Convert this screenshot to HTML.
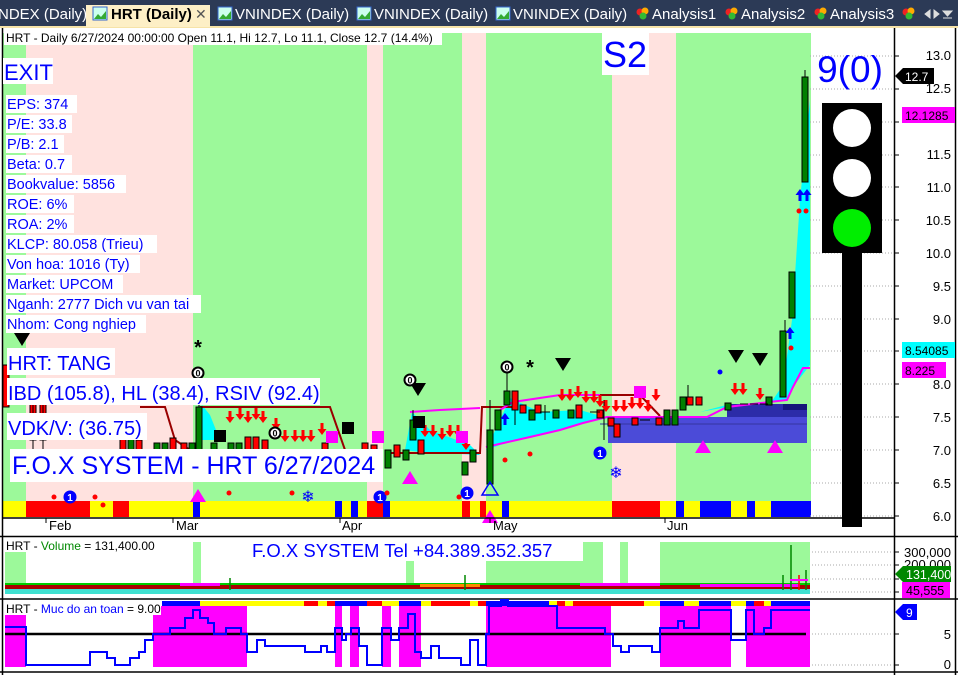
<!DOCTYPE html>
<html><head><meta charset="utf-8"><style>
body{margin:0;width:958px;height:675px;overflow:hidden;background:#fff;font-family:"Liberation Sans",Arial,sans-serif;}
svg{position:absolute;left:0;top:0}
</style></head><body>
<svg width="958" height="675" xmlns="http://www.w3.org/2000/svg" font-family="Liberation Sans, Arial, sans-serif">
<defs>
<g id="ra"><path d="M-1.5,-7 h3 v6 h3 l-4.5,6 l-4.5,-6 h3z" fill="#f00"/></g>
<g id="ba"><path d="M-1.5,7 h3 v-6 h3 l-4.5,-6 l-4.5,6 h3z" fill="#00f"/></g>
<g id="bt"><path d="M-8,-7 h16 l-8,13z" fill="#000"/></g>
<g id="mt"><path d="M-8,6 h16 l-8,-13z" fill="#f0f"/></g>
<g id="one"><circle r="6.5" fill="#00f"/><text y="4" text-anchor="middle" font-size="10" font-weight="bold" fill="#fff">1</text></g>
<g id="zero"><circle r="5.5" fill="#fff" stroke="#000" stroke-width="2"/><text y="3.5" text-anchor="middle" font-size="9" font-weight="bold">0</text></g>
</defs>
<!-- tab bar -->
<rect x="0" y="0" width="958" height="28" fill="#2c3a56"/>
<rect x="0" y="26" width="958" height="2" fill="#f6e3a8"/>
<path d="M86,27 V5 h124 v22z" fill="#fdefc6"/>
<g font-size="15" fill="#fff">
<text x="-2" y="19">NDEX (Daily)</text>
<rect x="93" y="7" width="14" height="13" fill="#cfe" stroke="#36c"/><path d="M94,19 l4,-5 3,3 5,-6 v8z" fill="#3a3"/>
<text x="111" y="19" fill="#000" font-weight="bold">HRT (Daily)</text>
<text x="195" y="19" fill="#555" font-size="14">✕</text>
<rect x="218" y="7" width="14" height="13" fill="#cfe" stroke="#36c"/><path d="M219,19 l4,-5 3,3 5,-6 v8z" fill="#3a3"/>
<text x="235" y="19">VNINDEX (Daily)</text>
<rect x="357" y="7" width="14" height="13" fill="#cfe" stroke="#36c"/><path d="M358,19 l4,-5 3,3 5,-6 v8z" fill="#3a3"/>
<text x="374" y="19">VNINDEX (Daily)</text>
<rect x="496" y="7" width="14" height="13" fill="#cfe" stroke="#36c"/><path d="M497,19 l4,-5 3,3 5,-6 v8z" fill="#3a3"/>
<text x="513" y="19">VNINDEX (Daily)</text>
<g><circle cx="640" cy="12" r="3.5" fill="#e22"/><circle cx="645" cy="11" r="3.5" fill="#fa0"/><circle cx="643" cy="16" r="3.5" fill="#3b3"/></g>
<text x="652" y="19">Analysis1</text>
<g><circle cx="729" cy="12" r="3.5" fill="#e22"/><circle cx="734" cy="11" r="3.5" fill="#fa0"/><circle cx="732" cy="16" r="3.5" fill="#3b3"/></g>
<text x="741" y="19">Analysis2</text>
<g><circle cx="818" cy="12" r="3.5" fill="#e22"/><circle cx="823" cy="11" r="3.5" fill="#fa0"/><circle cx="821" cy="16" r="3.5" fill="#3b3"/></g>
<text x="830" y="19">Analysis3</text>
<g><circle cx="906" cy="12" r="3.5" fill="#e22"/><circle cx="911" cy="11" r="3.5" fill="#fa0"/><circle cx="909" cy="16" r="3.5" fill="#3b3"/></g>
<path d="M925,14 l5,-4 v8z M934,10 l5,4 -5,4z M943,11 h9 l-4.5,5z M943,18 h9" fill="#ddd" stroke="#ddd"/>
</g>
<!-- main bg stripes -->
<g>
<rect x="3" y="33" width="23" height="468" fill="#9cf99a"/>
<rect x="26" y="33" width="167" height="468" fill="#ffe2df"/>
<rect x="193" y="33" width="174" height="468" fill="#9cf99a"/>
<rect x="367" y="33" width="16" height="468" fill="#ffe2df"/>
<rect x="383" y="33" width="79" height="468" fill="#9cf99a"/>
<rect x="462" y="33" width="24" height="468" fill="#ffe2df"/>
<rect x="486" y="33" width="126" height="468" fill="#9cf99a"/>
<rect x="612" y="33" width="64" height="468" fill="#ffe2df"/>
<rect x="676" y="33" width="135" height="468" fill="#9cf99a"/>
</g>
<!-- color bar -->
<g>
<rect x="3" y="501" width="808" height="16" fill="#ff0"/>
<rect x="26" y="501" width="64" height="16" fill="#f00"/>
<rect x="113" y="501" width="16" height="16" fill="#f00"/>
<rect x="193" y="501" width="7" height="16" fill="#00f"/>
<rect x="335" y="501" width="7" height="16" fill="#00f"/>
<rect x="351" y="501" width="7" height="16" fill="#00f"/>
<rect x="367" y="501" width="16" height="16" fill="#f00"/>
<rect x="383" y="501" width="7" height="16" fill="#00f"/>
<rect x="462" y="501" width="8" height="16" fill="#f00"/>
<rect x="480" y="501" width="6" height="16" fill="#f00"/>
<rect x="502" y="501" width="7" height="16" fill="#00f"/>
<rect x="612" y="501" width="48" height="16" fill="#f00"/>
<rect x="676" y="501" width="8" height="16" fill="#00f"/>
<rect x="700" y="501" width="31" height="16" fill="#00f"/>
<rect x="747" y="501" width="8" height="16" fill="#00f"/>
<rect x="771" y="501" width="40" height="16" fill="#00f"/>
</g>
<!-- grid dotted -->
<g stroke="#aaa" stroke-dasharray="1,2">
<path d="M810,56H894M810,89H894M810,122H894M810,155H894M810,187H894M810,220H894M810,253H894M810,286H894M810,319H894M810,351H894M810,384H894M810,417H894M810,450H894M810,483H894M810,516H894"/>
</g>
<!-- cyan areas -->
<g fill="#0ff">
<path d="M486,450 L500,420 L510,398 L540,412 L580,410 L608,418 L583,423 L560,430 L530,437 L500,445z"/>
<path d="M196,440 L202,405 L210,415 L220,440z"/>
<path d="M405,450 L412,412 L430,430 L470,445 L480,455 L420,452z"/>
<path d="M700,412 L730,404 L770,404 L783,385 L792,320 L800,200 L810,100 L810,365 L793,387 L787,400 L727,407z"/>
</g>
<!-- blue boxes -->
<rect x="608" y="417" width="199" height="26" fill="#4b4bd8"/>
<rect x="727" y="404" width="80" height="13" fill="#2c2ca8"/>
<rect x="783" y="404" width="24" height="6" fill="#15157a"/>
<path d="M600,424H807" stroke="#3535a0"/>
<!-- lines -->
<g fill="none" stroke-width="2">
<path d="M140,407 L165,407 L175,440 L190,450" stroke="#900"/>
<path d="M200,407 L330,407 L345,450" stroke="#900"/>
<path d="M390,453 L480,453 L482,407 L513,407" stroke="#900"/>
<path d="M560,395 L640,395 L660,416" stroke="#900"/>
<path d="M410,412 L440,410 L480,408" stroke="#f0f"/>
<path d="M486,447 L530,437 L560,430 L583,423 L607,417 L707,417 L727,407 L787,400 L793,387 L803,368 L810,368" stroke="#f0f"/>
<path d="M500,410 L513,402 L560,395 L600,395" stroke="#f0f"/>
</g>
<!-- candles -->
<g stroke="#000" stroke-width="1">
<g fill="#f00">
<rect x="3" y="365" width="6" height="42"/><rect x="30" y="392" width="6" height="48"/><rect x="40" y="400" width="6" height="40"/>
<rect x="120" y="435" width="6" height="15"/><rect x="136" y="440" width="6" height="10"/>
<rect x="170" y="438" width="6" height="12"/><rect x="181" y="443" width="6" height="7"/>
<rect x="245" y="437" width="6" height="13"/><rect x="253" y="437" width="6" height="13"/><rect x="262" y="440" width="6" height="10"/><rect x="322" y="443" width="6" height="7"/>
<rect x="362" y="443" width="6" height="9"/><rect x="371" y="445" width="6" height="8"/><rect x="394" y="445" width="6" height="12"/><rect x="418" y="440" width="6" height="14"/>
<rect x="512" y="391" width="6" height="19"/><rect x="520" y="405" width="6" height="8"/><rect x="535" y="405" width="6" height="8"/><rect x="576" y="405" width="6" height="13"/><rect x="597" y="410" width="6" height="8"/><rect x="608" y="418" width="6" height="8"/><rect x="614" y="424" width="6" height="13"/><rect x="632" y="418" width="6" height="7"/><rect x="656" y="418" width="6" height="7"/><rect x="687" y="397" width="6" height="8"/><rect x="696" y="397" width="6" height="8"/>
</g>
<g fill="#008000">
<rect x="154" y="443" width="6" height="7"/><rect x="162" y="443" width="6" height="7"/><rect x="189" y="443" width="6" height="7"/>
<rect x="128" y="438" width="6" height="12"/>
<rect x="196" y="407" width="6" height="43"/><path d="M199,450V480" />
<rect x="211" y="443" width="6" height="7"/><rect x="228" y="443" width="6" height="7"/><rect x="236" y="443" width="6" height="7"/>
<rect x="385" y="450" width="6" height="18"/><rect x="403" y="450" width="6" height="10"/><rect x="410" y="420" width="6" height="20"/><rect x="462" y="462" width="6" height="13"/><rect x="470" y="450" width="6" height="12"/>
<rect x="487" y="430" width="6" height="54"/><rect x="495" y="410" width="6" height="20"/><rect x="504" y="391" width="6" height="14"/><rect x="529" y="410" width="6" height="10"/><rect x="553" y="410" width="6" height="8"/><rect x="568" y="410" width="6" height="8"/>
<rect x="664" y="410" width="6" height="15"/><rect x="672" y="410" width="6" height="15"/><rect x="680" y="397" width="6" height="13"/><rect x="725" y="403" width="6" height="7"/><rect x="766" y="397" width="6" height="8"/>
<rect x="780" y="331" width="6" height="66"/><rect x="789" y="272" width="6" height="46"/><rect x="802" y="77" width="6" height="105"/>
</g>
<path d="M33,380V450M43,390V450M199,398V407M413,410V420M490,400V430M507,370V391M515,410V425M604,400V440M688,385V397M785,320V331M805,70V77M545,405V420M540,412h10M590,412h10M640,420h10M740,404h8M750,404h8M760,404h8" fill="none"/>
</g>
<!-- markers -->
<g>
<use href="#ra" x="230" y="418"/><use href="#ra" x="240" y="415"/><use href="#ra" x="248" y="418"/><use href="#ra" x="256" y="415"/><use href="#ra" x="263" y="418"/><use href="#ra" x="276" y="425"/><use href="#ra" x="285" y="437"/><use href="#ra" x="295" y="437"/><use href="#ra" x="303" y="437"/><use href="#ra" x="311" y="437"/><use href="#ra" x="322" y="430"/><use href="#ra" x="220" y="437"/>
<use href="#ra" x="425" y="432"/><use href="#ra" x="433" y="432"/><use href="#ra" x="442" y="435"/><use href="#ra" x="450" y="432"/><use href="#ra" x="458" y="432"/><use href="#ra" x="466" y="445"/>
<use href="#ra" x="562" y="396"/><use href="#ra" x="570" y="396"/><use href="#ra" x="578" y="393"/><use href="#ra" x="586" y="398"/><use href="#ra" x="594" y="398"/><use href="#ra" x="600" y="402"/><use href="#ra" x="606" y="407"/><use href="#ra" x="616" y="407"/><use href="#ra" x="624" y="407"/><use href="#ra" x="632" y="404"/><use href="#ra" x="640" y="404"/><use href="#ra" x="648" y="407"/><use href="#ra" x="656" y="396"/>
<use href="#ra" x="735" y="390"/><use href="#ra" x="743" y="390"/><use href="#ra" x="760" y="395"/>
<use href="#ba" x="800" y="194"/><use href="#ba" x="807" y="194"/><use href="#ba" x="790" y="332"/><use href="#ba" x="505" y="418"/>
<use href="#bt" x="22" y="340"/><use href="#bt" x="418" y="390"/><use href="#bt" x="563" y="365"/><use href="#bt" x="736" y="357"/><use href="#bt" x="760" y="360"/>
<use href="#mt" x="198" y="496"/><use href="#mt" x="410" y="478"/><use href="#mt" x="703" y="447"/><use href="#mt" x="775" y="447"/><use href="#mt" x="490" y="517"/>
<path d="M482,495 h16 l-8,-13z" fill="none" stroke="#00f" stroke-width="1.5"/>
<use href="#one" x="70" y="497"/><use href="#one" x="600" y="453"/><use href="#one" x="380" y="497"/><use href="#one" x="467" y="493"/>
<use href="#zero" x="198" y="373"/><use href="#zero" x="410" y="380"/><use href="#zero" x="275" y="433"/><use href="#zero" x="507" y="367"/>
<g fill="#f0f"><rect x="326" y="431" width="12" height="12"/><rect x="372" y="431" width="12" height="12"/><rect x="456" y="431" width="12" height="12"/><rect x="634" y="386" width="12" height="12"/></g>
<g fill="#000"><rect x="214" y="430" width="12" height="12"/><rect x="342" y="422" width="12" height="12"/><rect x="413" y="416" width="12" height="12"/></g>
<text x="198" y="354" text-anchor="middle" font-size="20" font-weight="bold">*</text>
<text x="530" y="374" text-anchor="middle" font-size="20" font-weight="bold">*</text>
<g fill="#f00"><circle cx="799" cy="211" r="2.5"/><circle cx="806" cy="211" r="2.5"/><circle cx="791" cy="348" r="2.5"/><circle cx="54" cy="497" r="2.5"/><circle cx="95" cy="497" r="2.5"/><circle cx="103" cy="505" r="2.5"/><circle cx="229" cy="493" r="2.5"/><circle cx="292" cy="493" r="2.5"/><circle cx="387" cy="493" r="2.5"/><circle cx="505" cy="460" r="2.5"/><circle cx="530" cy="454" r="2.5"/><circle cx="459" cy="497" r="2.5"/></g>
<circle cx="720" cy="372" r="2.5" fill="#00f"/>
<text x="616" y="478" text-anchor="middle" font-size="16" fill="#00f">❄</text>
<text x="308" y="502" text-anchor="middle" font-size="16" fill="#00f">❄</text>
</g>
<!-- axis -->
<path d="M3,518H894" stroke="#000" stroke-width="1.5"/>
<path d="M46,518v5M173,518v5M340,518v5M490,518v5M665,518v5" stroke="#000"/>
<g font-size="13"><text x="49" y="530">Feb</text><text x="176" y="530">Mar</text><text x="342" y="530">Apr</text><text x="493" y="530">May</text><text x="667" y="530">Jun</text></g>
<!-- traffic light -->
<rect x="842" y="250" width="20" height="277" fill="#000"/>
<rect x="822" y="103" width="60" height="150" fill="#000"/>
<circle cx="852" cy="128" r="19" fill="#fff"/><circle cx="852" cy="178" r="19" fill="#fff"/><circle cx="852" cy="228" r="19" fill="#0e0"/>
<text x="850" y="82" text-anchor="middle" font-size="37" fill="#00f">9(0)</text>
<!-- right scale -->
<path d="M894.5,28V675M0,536.5H958M0,599H958M0,672H958M2.5,28V675M955.5,28V675" stroke="#000" stroke-width="1.5"/>
<g font-size="13" text-anchor="end">
<text x="951" y="60">13.0</text><text x="951" y="93">12.5</text><text x="951" y="159">11.5</text><text x="951" y="192">11.0</text><text x="951" y="225">10.5</text><text x="951" y="258">10.0</text><text x="951" y="291">9.5</text><text x="951" y="324">9.0</text><text x="951" y="389">8.0</text><text x="951" y="422">7.5</text><text x="951" y="455">7.0</text><text x="951" y="488">6.5</text><text x="951" y="521">6.0</text>
</g>
<path d="M894,56h5M894,89h5M894,122h5M894,155h5M894,187h5M894,220h5M894,253h5M894,286h5M894,319h5M894,351h5M894,384h5M894,417h5M894,450h5M894,483h5M894,516h5" stroke="#000"/>
<path d="M895,76 l8,-8 h31 v16 h-31z" fill="#000"/><text x="905" y="81" font-size="12" fill="#fff">12.7</text>
<rect x="902" y="107" width="53" height="16" fill="#f0f"/><text x="905" y="120" font-size="12">12.1285</text>
<rect x="902" y="342" width="53" height="16" fill="#0ff"/><text x="905" y="355" font-size="12">8.54085</text>
<rect x="902" y="362" width="44" height="16" fill="#f0f"/><text x="905" y="375" font-size="12">8.225</text>
<!-- header text -->
<rect x="4" y="31" width="438" height="14" fill="#fff"/>
<text x="6" y="42" font-size="12">HRT - Daily 6/27/2024 00:00:00 Open 11.1, Hi 12.7, Lo 11.1, Close 12.7 (14.4%)</text>
<rect x="602" y="33" width="47" height="42" fill="#fff"/><text x="625" y="67" text-anchor="middle" font-size="36" fill="#00f">S2</text>
<rect x="3" y="58" width="50" height="26" fill="#fff"/><text x="4" y="80" font-size="22" fill="#00f">EXIT</text>
<g font-size="14.5" fill="#00f">
<rect x="6" y="95" width="71" height="18" fill="#fff"/><text x="7" y="109">EPS: 374</text>
<rect x="6" y="115" width="66" height="18" fill="#fff"/><text x="7" y="129">P/E: 33.8</text>
<rect x="6" y="135" width="58" height="18" fill="#fff"/><text x="7" y="149">P/B: 2.1</text>
<rect x="6" y="155" width="66" height="18" fill="#fff"/><text x="7" y="169">Beta: 0.7</text>
<rect x="6" y="175" width="120" height="18" fill="#fff"/><text x="7" y="189">Bookvalue: 5856</text>
<rect x="6" y="195" width="68" height="18" fill="#fff"/><text x="7" y="209">ROE: 6%</text>
<rect x="6" y="215" width="68" height="18" fill="#fff"/><text x="7" y="229">ROA: 2%</text>
<rect x="6" y="235" width="151" height="18" fill="#fff"/><text x="7" y="249">KLCP: 80.058 (Trieu)</text>
<rect x="6" y="255" width="134" height="18" fill="#fff"/><text x="7" y="269">Von hoa: 1016 (Ty)</text>
<rect x="6" y="275" width="117" height="18" fill="#fff"/><text x="7" y="289">Market: UPCOM</text>
<rect x="6" y="295" width="195" height="18" fill="#fff"/><text x="7" y="309">Nganh: 2777 Dich vu van tai</text>
<rect x="6" y="315" width="140" height="18" fill="#fff"/><text x="7" y="329">Nhom: Cong nghiep</text>
</g>
<g fill="#00f" font-size="20">
<rect x="7" y="348" width="108" height="27" fill="#fff"/><text x="8" y="370">HRT: TANG</text>
<rect x="7" y="378" width="313" height="27" fill="#fff"/><text x="8" y="400">IBD (105.8), HL (38.4), RSIV (92.4)</text>
<rect x="7" y="413" width="140" height="27" fill="#fff"/><text x="8" y="435">VDK/V:  (36.75)</text>
<rect x="10" y="449" width="373" height="33" fill="#fff"/><text x="12" y="474" font-size="25">F.O.X SYSTEM - HRT 6/27/2024</text>
</g>
<!-- volume panel -->
<g fill="#9cf99a">
<rect x="5" y="542" width="21" height="49"/><rect x="193" y="542" width="8" height="49"/><rect x="406" y="542" width="8" height="49"/><rect x="486" y="542" width="117" height="49"/><rect x="620" y="542" width="8" height="49"/><rect x="660" y="542" width="150" height="49"/>
</g>
<rect x="5" y="583" width="805" height="5" fill="#0c0"/>
<rect x="5" y="585" width="805" height="4" fill="#a00"/>
<rect x="180" y="583" width="40" height="3" fill="#f0f"/><rect x="420" y="584" width="60" height="3" fill="#f80"/><rect x="580" y="583" width="80" height="3" fill="#f0f"/><rect x="700" y="584" width="100" height="3" fill="#f0f"/>
<rect x="5" y="589" width="805" height="5" fill="#40e0d0"/>
<g stroke="#080" stroke-width="1.5"><path d="M791,545V590M783,575V590M806,570V590M465,575V590M230,578V590"/></g>
<path d="M799,575V590" stroke="#f00" stroke-width="1.5"/>
<path d="M790,580H808" stroke="#f0f" stroke-width="2"/>
<rect x="4" y="539" width="156" height="13" fill="#fff"/>
<text x="6" y="550" font-size="12">HRT - <tspan fill="#080">Volume</tspan> = 131,400.00</text>
<rect x="250" y="540" width="333" height="21" fill="#fff"/>
<text x="252" y="557" font-size="18.5" fill="#00f">F.O.X SYSTEM Tel +84.389.352.357</text>
<g stroke="#aaa" stroke-dasharray="1,2"><path d="M812,552H894M812,565H894M812,579H894M812,592H894M812,634H894M812,665H894"/></g>
<g font-size="13" text-anchor="end"><text x="951" y="557">300,000</text><text x="951" y="569">200,000</text><text x="951" y="669">0</text><text x="951" y="639">5</text></g>
<path d="M894,552h5M894,565h5M894,579h5M894,592h5M894,634h5M894,665h5" stroke="#000"/>
<path d="M895,574 l8,-8 h48 v16 h-48z" fill="#080"/><text x="906" y="579" font-size="12.5" fill="#fff">131,400</text>
<rect x="902" y="582" width="48" height="16" fill="#f0f"/><text x="906" y="595" font-size="12.5">45,555</text>
<!-- safety panel -->
<g fill="#f0f">
<rect x="5" y="606" width="21" height="61"/><rect x="153" y="606" width="94" height="61"/><rect x="335" y="606" width="7" height="61"/><rect x="350" y="606" width="9" height="61"/><rect x="382" y="606" width="9" height="61"/><rect x="399" y="606" width="22" height="61"/><rect x="486" y="606" width="125" height="61"/><rect x="660" y="606" width="71" height="61"/><rect x="746" y="606" width="64" height="61"/>
</g>
<g>
<rect x="162" y="601" width="648" height="5" fill="#ff0"/>
<rect x="162" y="601" width="38" height="5" fill="#00f"/><rect x="304" y="601" width="14" height="5" fill="#f00"/><rect x="327" y="601" width="8" height="5" fill="#f00"/><rect x="335" y="601" width="32" height="5" fill="#00f"/><rect x="367" y="601" width="15" height="5" fill="#f00"/><rect x="399" y="601" width="22" height="5" fill="#00f"/><rect x="431" y="601" width="39" height="5" fill="#f00"/><rect x="478" y="601" width="8" height="5" fill="#f00"/><rect x="486" y="601" width="63" height="5" fill="#00f"/><rect x="557" y="601" width="8" height="5" fill="#f00"/><rect x="573" y="601" width="71" height="5" fill="#f00"/><rect x="660" y="601" width="24" height="5" fill="#00f"/><rect x="699" y="601" width="32" height="5" fill="#00f"/><rect x="746" y="601" width="8" height="5" fill="#00f"/><rect x="754" y="601" width="10" height="5" fill="#f00"/><rect x="771" y="601" width="39" height="5" fill="#00f"/>
</g>
<path d="M5,634H806" stroke="#000" stroke-width="2.5"/>
<path d="M5,627 H26 V665 H90 V652 H107 V658 H115 V665 H130 V658 H139 V652 H145 V640 H153 V634 H170 V628 H185 V618 H193 V610 H200 V618 H208 V623 H214 V634 H226 V628 H241 V634 H247 V652 H257 V640 H265 V646 H305 V652 H321 V646 H327 V652 H335 V628 H342 V640 H346 V634 H351 V628 H359 V646 H367 V665 H382 V628 H391 V640 H399 V628 H408 V614 H415 V652 H421 V658 H431 V646 H439 V658 H461 V665 H470 V640 H478 V665 H486 V634 H489 V606 H501 V600 H508 V606 H557 V628 H605 V634 H613 V646 H621 V652 H629 V646 H652 V652 H660 V628 H678 V621 H684 V628 H699 V610 H731 V640 H746 V610 H754 V634 H764 V628 H771 V610 H810" fill="none" stroke="#00f" stroke-width="2"/>
<rect x="4" y="602" width="157" height="13" fill="#fff"/>
<text x="6" y="613" font-size="12">HRT - <tspan fill="#00f">Muc do an toan</tspan> = 9.00</text>
<path d="M895,612 l8,-8 h14 v16 h-14z" fill="#00f"/><text x="906" y="617" font-size="12" fill="#fff">9</text>
</svg>
</body></html>
